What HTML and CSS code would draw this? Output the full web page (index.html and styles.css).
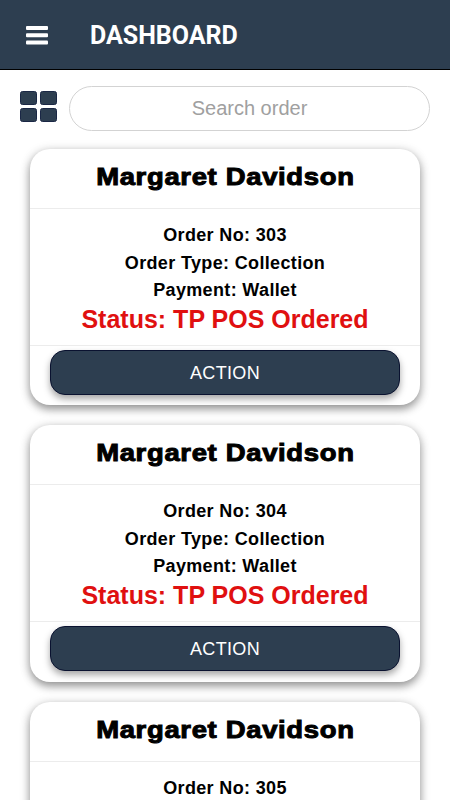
FILE: index.html
```html
<!DOCTYPE html>
<html lang="en">

<head>
    <meta charset="UTF-8">
    <meta name="viewport" content="width=device-width, initial-scale=1.0">
    <title>Dashboard</title>
    <link rel="stylesheet" href="styles.css">
</head>

<body>
    <header class="topbar">
        <button class="menu" aria-label="Menu">
            <svg width="22" height="19" viewBox="0 0 22 19" fill="#fff">
                <rect x="0" y="0" width="22" height="4" rx="1" />
                <rect x="0" y="7.3" width="22" height="4" rx="1" />
                <rect x="0" y="14.6" width="22" height="4" rx="1" />
            </svg>
        </button>
        <h1>DASHBOARD</h1>
    </header>
    <main class="container">
        <div class="search">
            <svg class="search__grid" width="37" height="32" viewBox="0 0 37 32" fill="#2d3e50" stroke="#1a2745" stroke-width="1">
                <rect x="0.5" y="0.5" width="16" height="13" rx="2" />
                <rect x="20.5" y="0.5" width="16" height="13" rx="2" />
                <rect x="0.5" y="17.5" width="16" height="13" rx="2" />
                <rect x="20.5" y="17.5" width="16" height="13" rx="2" />
            </svg>
            <input class="search__input" type="text" placeholder="Search order">
        </div>
        <section class="orders">
            <article class="card">
                <h2 class="card__name"><span>Margaret Davidson</span></h2>
                <div class="card__info">
                    <p>Order No: 303</p>
                    <p>Order Type: Collection</p>
                    <p>Payment: Wallet</p>
                    <p class="status">Status: TP POS Ordered</p>
                </div>
                <div class="card__footer"><button class="action">ACTION</button></div>
            </article>
            <article class="card">
                <h2 class="card__name"><span>Margaret Davidson</span></h2>
                <div class="card__info">
                    <p>Order No: 304</p>
                    <p>Order Type: Collection</p>
                    <p>Payment: Wallet</p>
                    <p class="status">Status: TP POS Ordered</p>
                </div>
                <div class="card__footer"><button class="action">ACTION</button></div>
            </article>
            <article class="card">
                <h2 class="card__name"><span>Margaret Davidson</span></h2>
                <div class="card__info">
                    <p>Order No: 305</p>
                </div>
            </article>
        </section>
    </main>
</body>

</html>
```

FILE: styles.css
```css
* {
    box-sizing: border-box;
}

body {
    height: 100vh;
    margin: 0;
    overflow: hidden;
    background-color: #fff;
    font-family: "Liberation Sans", Arial, sans-serif;
}

h1,
h2,
p {
    margin: 0;
}

.topbar {
    display: flex;
    align-items: center;
    gap: 42px;
    height: 70px;
    padding: 2px 0 0 26px;
    background-color: #2d3e50;
    border-bottom: 1px solid #000;
    color: #fff;
}

.topbar h1 {
    font-family: Roboto, sans-serif;
    font-size: 25px;
    font-weight: 700;
    line-height: 30px;
}

.menu {
    display: flex;
    padding: 0;
    background: none;
    border: 0;
}

.search {
    display: flex;
    align-items: center;
    gap: 12px;
    padding: 16px 20px 18px;
}

.search__grid {
    flex: none;
    margin-bottom: 3px;
}

.search__input {
    flex: 1;
    min-width: 0;
    height: 45px;
    padding: 0 20px;
    border: 1px solid #d3d3d3;
    border-radius: 23px;
    font-family: inherit;
    font-size: 20px;
    text-align: center;
}

.search__input::placeholder {
    color: #a0a0a0;
}

.orders {
    display: flex;
    flex-direction: column;
    gap: 20px;
    padding: 0 30px;
}

.card {
    height: 256.3px;
    background-color: #fff;
    border-radius: 20px;
    box-shadow: 0 4px 8px rgba(0, 0, 0, 0.35), 0 2px 12px rgba(0, 0, 0, 0.16);
    text-align: center;
}

.card__name {
    height: 60px;
    border-bottom: 1px solid #ececec;
    font-size: 24.5px;
    line-height: 56px;
    letter-spacing: 0.6px;
    -webkit-text-stroke: 1px #000;
}

/* widened to get the heavy, broad look */
.card__name span {
    display: inline-block;
    transform: scaleX(1.12);
}

.card__info {
    height: 137px;
    padding-top: 13px;
    border-bottom: 1px solid #ececec;
    font-size: 18px;
    font-weight: 700;
    line-height: 27.5px;
    letter-spacing: 0.35px;
}

.card__info .status {
    color: #e01010;
    font-size: 25px;
    line-height: 28px;
    letter-spacing: 0;
}

.card__footer {
    padding: 4px 20px 0;
}

.action {
    display: block;
    width: 100%;
    height: 45px;
    padding: 1px 0 0;
    background-color: #2d3e50;
    border: 1px solid #0a1230;
    border-radius: 15px;
    box-shadow: 0 4px 7px rgba(0, 0, 0, 0.35);
    color: #fff;
    font-family: inherit;
    font-size: 18px;
    letter-spacing: 0.35px;
}
```
